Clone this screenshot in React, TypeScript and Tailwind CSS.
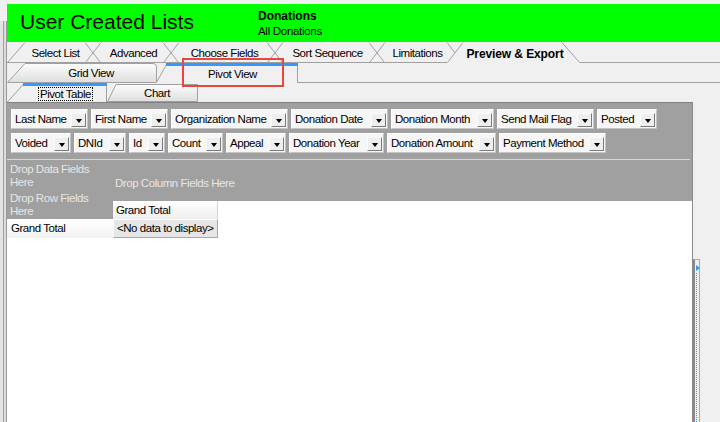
import React from "react";

type MainTab = { label: string; width: number; tl: number; tr: number; wc: string; ml: string; bottomEnd?: number; selected?: boolean };

const mainTabs: MainTab[] = [
  { label: "Select List", width: 94, tl: 18, tr: 78, wc: "w-[94px]", ml: "ml-0" },
  { label: "Advanced", width: 94, tl: 16, tr: 78, wc: "w-[94px]", ml: "-ml-[16px]" },
  { label: "Choose Fields", width: 120, tl: 16, tr: 104, wc: "w-[120px]", ml: "-ml-[16px]" },
  { label: "Sort Sequence", width: 118, tl: 16, tr: 102, wc: "w-[118px]", ml: "-ml-[16px]" },
  { label: "Limitations", width: 94, tl: 16, tr: 78, wc: "w-[94px]", ml: "-ml-[16px]", bottomEnd: 78 },
  { label: "Preview & Export", width: 133, tl: 16, tr: 115, wc: "w-[133px]", ml: "-ml-[16px]", selected: true },
];

const row1 = [
  { label: "Last Name", w: "w-[77px]" },
  { label: "First Name", w: "w-[77px]" },
  { label: "Organization Name", w: "w-[117px]" },
  { label: "Donation Date", w: "w-[97px]" },
  { label: "Donation Month", w: "w-[103px]" },
  { label: "Send Mail Flag", w: "w-[97px]" },
  { label: "Posted", w: "w-[60px]" },
];

const row2 = [
  { label: "Voided", w: "w-[60px]" },
  { label: "DNId", w: "w-[52px]" },
  { label: "Id", w: "w-[36px]" },
  { label: "Count", w: "w-[55px]" },
  { label: "Appeal", w: "w-[60px]" },
  { label: "Donation Year", w: "w-[95px]" },
  { label: "Donation Amount", w: "w-[109px]" },
  { label: "Payment Method", w: "w-[107px]" },
];

const txt = "text-[11.5px] tracking-[-0.45px]";

function FieldButton({ label, w }: { label: string; w: string }) {
  return (
    <div className={`${w} h-[20px] flex items-center justify-between pl-[3px] pr-[1px] bg-[#f6f6f6] border border-t-white border-l-white border-b-[#c4c4c4] border-r-[#c4c4c4]`}>
      <span className={`${txt} leading-none pt-[1px] text-black whitespace-nowrap`}>{label}</span>
      <span className="w-[15px] h-[14px] self-end mb-[1px] flex items-end justify-center pb-[3px] bg-[#eeeeee] border border-t-[#fcfcfc] border-l-[#fcfcfc] border-r-[#7a7a7a] border-b-[#7a7a7a]">
        <span className="w-0 h-0 border-l-[3.5px] border-r-[3.5px] border-t-[4px] border-l-transparent border-r-transparent border-t-black" />
      </span>
    </div>
  );
}

function TopTab({ t }: { t: MainTab }) {
  const h = 21;
  return (
    <div className={`relative ${t.wc} ${t.ml} h-[21px] shrink-0 flex items-center justify-center pl-[3px] pt-[2px] ${t.selected ? "z-10" : ""}`}>
      <svg className="absolute inset-0" width={t.width} height={h}>
        {t.selected && <polygon points={`0,${h} ${t.tl},0 ${t.tr},0 ${t.width},${h}`} fill="#f0f0f0" />}
        <polyline points={`0.5,${h - 0.5} ${t.tl},0.5`} stroke="#a0a0a0" fill="none" />
        <polyline points={`${t.tr},0.5 ${t.width - 0.5},${h - 0.5}`} stroke="#a0a0a0" fill="none" />
        {!t.selected && <line x1={0} y1={h - 0.5} x2={t.bottomEnd ?? t.width} y2={h - 0.5} stroke="#a0a0a0" />}
      </svg>
      <span className={`relative whitespace-nowrap text-black ${t.selected ? "text-[12px] font-bold tracking-[-0.1px]" : txt}`}>{t.label}</span>
    </div>
  );
}

export default function App() {
  return (
    <div className="relative w-[720px] h-[422px] overflow-hidden flex bg-[#f0f0f0] font-['Liberation_Sans',Arial,sans-serif]">
      {/* left rail */}
      <div className="w-[7px] flex flex-col shrink-0">
        <div className="h-[21px] bg-[#f0f0f0]" />
        <div className="flex-1 flex">
          <div className="w-[3px] bg-[#e4e4e4]" />
          <div className="w-px bg-[#a0a0a0]" />
          <div className="w-[2px] bg-[#dcdcdc]" />
          <div className="w-px bg-[#9a9a9a]" />
        </div>
      </div>

      <div className="flex-1 flex flex-col min-w-0">
        <div className="h-[4px]" />
        {/* header */}
        <div className="h-[38px] bg-[#00ff00] flex">
          <div className="w-[251px] pl-[13px] pt-[6px] text-[21px] leading-[24px] text-black whitespace-nowrap">User Created Lists</div>
          <div className="flex flex-col pt-[5px] text-black">
            <span className="text-[12px] font-bold leading-[14px]">Donations</span>
            <span className="text-[11.5px] leading-[13px] mt-[2px] tracking-[-0.3px]">All Donations</span>
          </div>
        </div>

        {/* main tabs */}
        <div className="flex h-[21px]">
          {mainTabs.map((t) => (
            <TopTab key={t.label} t={t} />
          ))}
          <div className="flex-1 border-b border-[#a0a0a0]" />
        </div>

        {/* view tabs */}
        <div className="flex h-[20px]">
          <div className="relative w-[150px] h-[20px] shrink-0 flex items-center justify-center pl-[18px] pt-[2px]">
            <svg className="absolute inset-0" width={150} height={20}>
              <defs>
                <linearGradient id="gv" x1="0" y1="0" x2="0" y2="1">
                  <stop offset="0" stopColor="#fcfcfc" />
                  <stop offset="1" stopColor="#dedede" />
                </linearGradient>
              </defs>
              <path d="M0.5,19.5 L18,0.5 L146,0.5 Q149.5,0.5 149.5,4 L149.5,19.5 Z" fill="url(#gv)" stroke="#a0a0a0" />
            </svg>
            <span className={`relative ${txt} text-black`}>Grid View</span>
          </div>
          <div className="relative w-[142px] -ml-[1px] h-[20px] shrink-0 flex items-center justify-center pl-[11px] pt-[3px]">
            <svg className="absolute inset-0" width={142} height={20}>
              <polygon points="0,20 11,0 142,0 142,20" fill="#f0f0f0" />
              <polyline points="0.5,19.5 11,0.5" stroke="#a0a0a0" fill="none" />
              <line x1={141.5} y1={0} x2={141.5} y2={20} stroke="#a0a0a0" />
              <rect x={10} y={0} width={132} height={3} fill="#3399ff" />
            </svg>
            <span className={`relative ${txt} text-black`}>Pivot View</span>
          </div>
          <div className="flex-1 border-b border-[#a0a0a0]" />
        </div>

        {/* pivot sub tabs */}
        <div className="flex h-[19px]">
          <div className="relative w-[100px] h-[19px] shrink-0 flex items-center justify-center pl-[17px] pt-[3px]">
            <svg className="absolute inset-0" width={100} height={19}>
              <polyline points="0.5,19 17,0.5" stroke="#a0a0a0" fill="none" />
              <line x1={99.5} y1={0} x2={99.5} y2={19} stroke="#a0a0a0" />
              <rect x={16} y={0} width={84} height={3} fill="#3399ff" />
            </svg>
            <span className={`relative ${txt} text-black border border-dotted border-black px-[1px] leading-[12px]`}>Pivot Table</span>
          </div>
          <div className="relative w-[91px] h-[19px] shrink-0 flex items-center justify-center pl-[9px] pt-[2px]">
            <svg className="absolute inset-0" width={91} height={19}>
              <defs>
                <linearGradient id="ch" x1="0" y1="0" x2="0" y2="1">
                  <stop offset="0" stopColor="#fcfcfc" />
                  <stop offset="1" stopColor="#dedede" />
                </linearGradient>
              </defs>
              <path d="M0.5,18.5 L9,1.5 L90.5,1.5 L90.5,18.5 Z" fill="url(#ch)" stroke="#a0a0a0" />
            </svg>
            <span className={`relative ${txt} text-black`}>Chart</span>
          </div>
          <div className="flex-1" />
        </div>

        {/* body */}
        <div className="flex flex-1 min-h-0">
          <div className="w-[686px] flex flex-col border-t border-[#808080] border-r border-r-[#8a8a8a] bg-white">
            <div className="bg-[#a0a0a0] pt-[6px] pl-[4px]">
              <div className="flex gap-[3px] h-[20px]">
                {row1.map((f) => (
                  <FieldButton key={f.label} label={f.label} w={f.w} />
                ))}
              </div>
              <div className="flex gap-[3px] h-[20px] mt-[4px]">
                {row2.map((f) => (
                  <FieldButton key={f.label} label={f.label} w={f.w} />
                ))}
              </div>
              <div className="h-px bg-[#d6d6d6] mt-[6px] -ml-[4px] mr-[2px]" />
            </div>

            <div className="flex">
              <div className={`w-[106px] flex flex-col bg-[#a0a0a0] text-[#e6e6e6] ${txt} leading-[13px]`}>
                <div className="h-[30px] pl-[3px] pt-[3px]">Drop Data Fields<br />Here</div>
                <div className="h-[29px] pl-[3px] pt-[2px]">Drop Row Fields<br />Here</div>
              </div>
              <div className="flex-1 flex flex-col">
                <div className={`h-[41px] bg-[#a0a0a0] pl-[2px] pt-[17px] text-[#e6e6e6] ${txt} leading-[13px]`}>Drop Column Fields Here</div>
                <div className="flex h-[18px]">
                  <div className={`w-[105px] flex items-center pl-[3px] pt-[1px] bg-gradient-to-b from-white to-[#eeeeee] border-r border-[#d4d4d4] ${txt} text-black`}>Grand Total</div>
                  <div className="flex-1 bg-white" />
                </div>
              </div>
            </div>
            <div className="flex h-[19px]">
              <div className={`w-[106px] flex items-center pl-[4px] pt-[1px] bg-gradient-to-b from-white to-[#f2f2f2] ${txt} text-black`}>Grand Total</div>
              <div className={`w-[105px] flex items-center pl-[3px] bg-[#e6e6e6] border border-t-white border-l-white border-r-[#a8a8a8] border-b-[#a8a8a8] ${txt} text-black whitespace-nowrap`}>&lt;No data to display&gt;</div>
              <div className="flex-1 bg-white" />
            </div>
            <div className="flex-1 bg-white" />
          </div>

          <div className="flex-1 flex flex-col">
            <div className="h-[157px]" />
            <div className="w-[7px] flex-1 flex flex-col border-l-2 border-l-[#8a8a8a] border-t border-r border-t-[#a8a8a8] border-r-[#a8a8a8] pt-[5px]">
              <span className="w-0 h-0 ml-[1px] border-t-[3px] border-b-[3px] border-l-[4px] border-t-transparent border-b-transparent border-l-[#3399ff]" />
              <span className="flex-1 ml-[1px] mt-[2px] border-l border-dotted border-[#3399ff]" />
            </div>
          </div>
        </div>
      </div>

      {/* annotation */}
      <div className="absolute left-[182px] top-[58px] w-[102px] h-[29px] border-2 border-[#e8473f]" />
    </div>
  );
}
